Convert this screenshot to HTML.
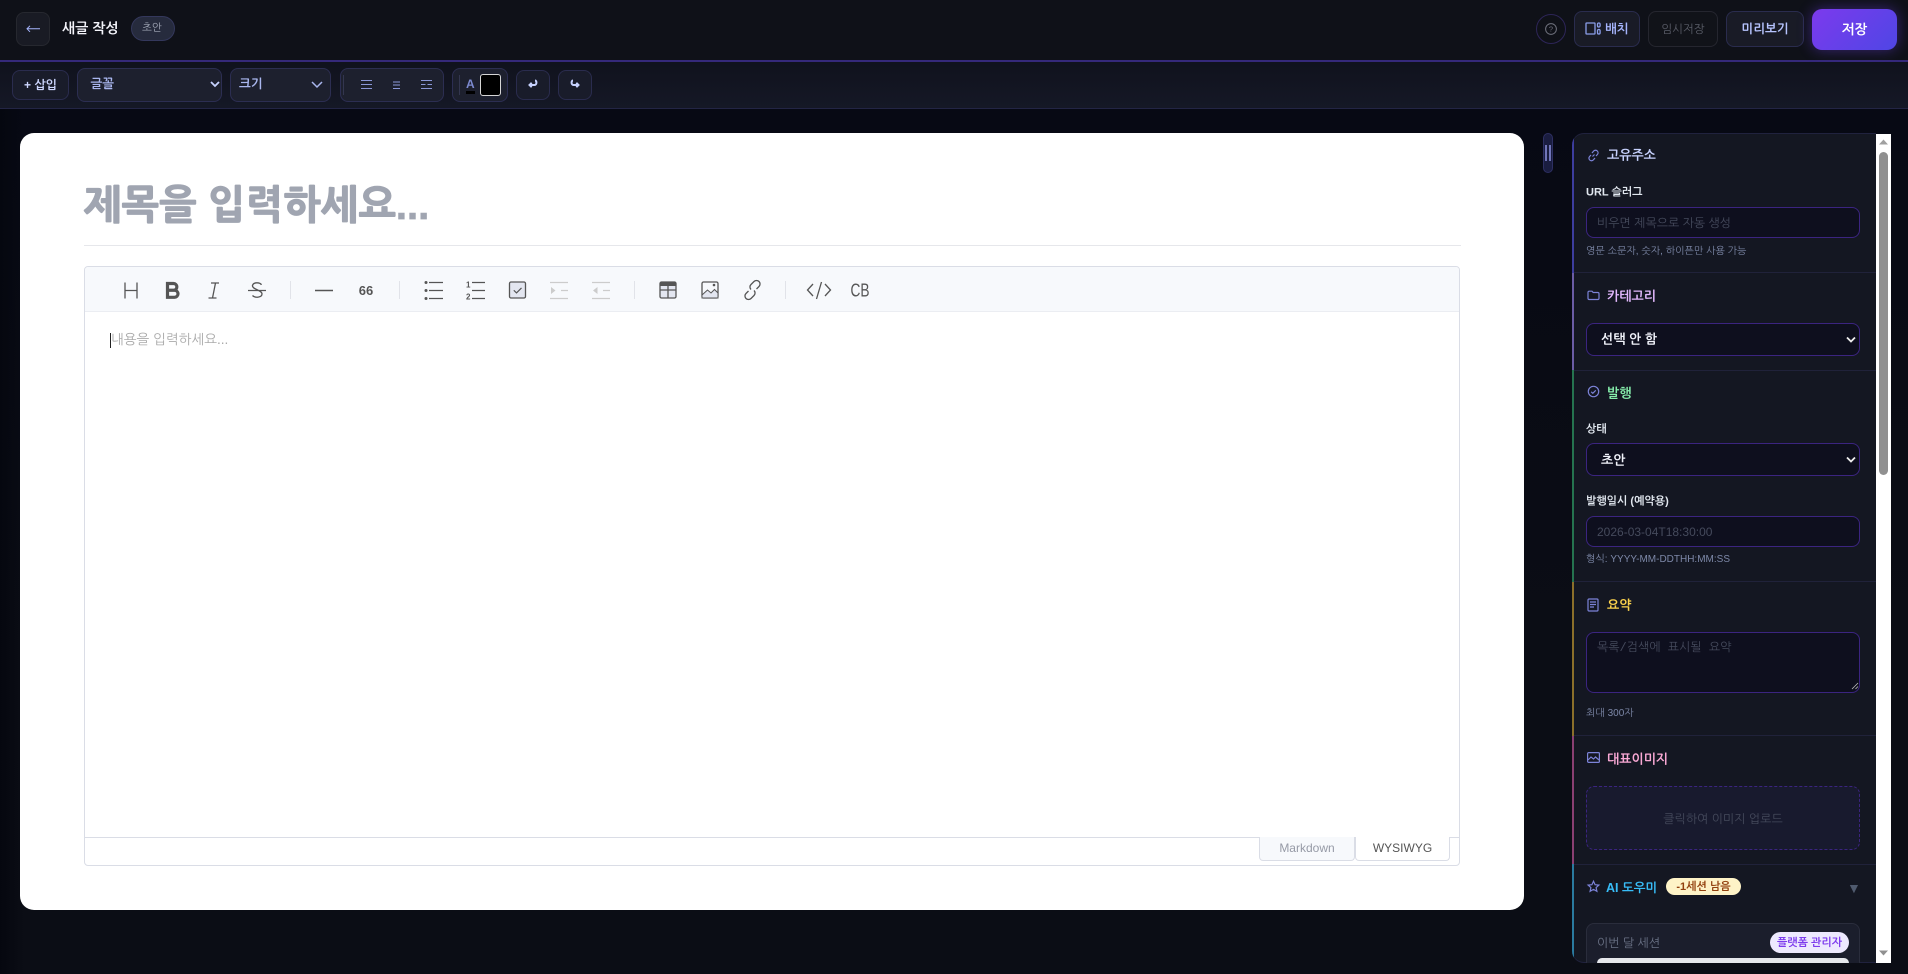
<!DOCTYPE html>
<html lang="ko"><head><meta charset="utf-8"><title>새 글 작성</title>
<style>
*{box-sizing:border-box}
html,body{margin:0;padding:0;width:1908px;height:974px;overflow:hidden;background:#0a0c14;font-family:"Liberation Sans","NanumGothic",sans-serif}
.a{position:absolute;white-space:nowrap}
.t{position:absolute;white-space:nowrap;line-height:1;transform:translateY(-50%)}
.btn{position:absolute;border:1px solid #2a2c4e;border-radius:8px;background:#1a1c27;display:flex;align-items:center;justify-content:center;white-space:nowrap}
.sel{position:absolute;border:1px solid #2c2e52;border-radius:8px;background:#1d202e;color:#c7d2fe;font-size:12px;font-weight:700}
.inp{position:absolute;width:274px;border:1px solid #3b2480;border-radius:8px;background:#0e0f1e}
svg{position:absolute;overflow:visible}
.ic{fill:none;stroke:#7c83d8;stroke-width:1.2}
.sep{position:absolute;top:281px;width:1px;height:18px;background:#e1e3e9}
.head{font-size:13px;font-weight:700}
.lab{font-size:11px;font-weight:700;color:#e2e8f0}
.hint{font-size:10px;color:#7d88a8}
.ph{font-size:12px;color:#454a5c}
.sec{position:absolute;left:0;width:2px}
.line{position:absolute;left:2px;right:0;height:1px;background:#20223a}
</style></head><body>

<!-- header -->
<div class="a" style="left:0;top:0;width:1908px;height:60px;background:#0f1118"></div>
<div class="a" style="left:0;top:60px;width:1908px;height:1.5px;background:#35297a"></div>
<div class="btn" style="left:16px;top:12px;width:34px;height:34px;background:#191b24;border-color:#26282f"></div>
<svg style="left:26px;top:25px" width="14" height="8" viewBox="0 0 14 8"><path d="M14 3.800H1M4 .8 1 3.800l3 3" fill="none" stroke="#a5b4fc" stroke-width="1"/></svg>
<div class="t" style="left:62px;top:28px;font-size:14px;font-weight:700;color:#f4f5fb">새글 작성</div>
<div class="a" style="left:131px;top:16px;width:44px;height:25px;border-radius:13px;background:#262b3d;border:1px solid #34385c"></div>
<div class="t" style="left:142px;top:27.500px;font-size:10.500px;color:#a3a9b8">초안</div>

<div class="a" style="left:1536px;top:14px;width:30px;height:30px;border-radius:50%;border:1px solid #2d2558"></div>
<svg style="left:1545px;top:23px" width="12" height="12" viewBox="0 0 12 12"><circle cx="6" cy="6" r="5.400" fill="none" stroke="#70727e" stroke-width="1"/><text x="6" y="8.600" font-size="7.500" fill="#70727e" text-anchor="middle" font-family="Liberation Sans">?</text></svg>

<div class="btn" style="left:1574px;top:11px;width:66px;height:36px;background:#191b26"></div>
<svg style="left:1585px;top:22px" width="16" height="13" viewBox="0 0 16 13" fill="none" stroke="#8b9eea" stroke-width="1.300"><rect x="1" y="1" width="9" height="11" rx=".5"/><rect x="12.500" y="1" width="2.600" height="4" rx="1.300"/><rect x="12.500" y="7.500" width="2.600" height="4.500" rx="1.300"/></svg>
<div class="t" style="left:1605px;top:29px;font-size:12.500px;font-weight:700;color:#a5b4fc">배치</div>
<div class="btn" style="left:1648px;top:11px;width:70px;height:36px;background:#111319;border-color:#25262f;color:#5b5e69;font-size:11.500px">임시저장</div>
<div class="btn" style="left:1726px;top:11px;width:78px;height:36px;background:#191b26;color:#b6c3fd;font-size:12.500px;font-weight:700">미리보기</div>
<div class="btn" style="left:1812px;top:9px;width:85px;height:41px;border:none;border-radius:10px;background:linear-gradient(135deg,#7c3aed,#4f46e5);color:#fff;font-size:13.500px;font-weight:700;box-shadow:0 0 14px rgba(109,60,235,.45)">저장</div>

<!-- toolbar -->
<div class="a" style="left:0;top:61.500px;width:1908px;height:46.500px;background:linear-gradient(#10121d,#151826)"></div>
<div class="a" style="left:0;top:108px;width:1908px;height:1px;background:#232545"></div>
<div class="a" style="left:0;top:109px;width:1908px;height:865px;background:linear-gradient(180deg,#070914,#0b0d15 60%);"></div>
<div class="a" style="left:0;top:109px;width:24px;height:865px;background:linear-gradient(90deg,#05070f,rgba(5,7,15,0))"></div>

<div class="btn" style="left:12px;top:70px;width:57px;height:30px;background:#191c2a;color:#cdd6fe;font-size:12px;font-weight:700">+ 삽입</div>
<div class="sel" style="left:77px;top:68px;width:145px;height:34px"></div>
<div class="t" style="left:90.500px;top:84px;font-size:12.500px;font-weight:700;color:#a9b6ee">글꼴</div>
<svg style="left:209.500px;top:81px" width="10" height="6" viewBox="0 0 10 6"><path d="M1 1l4 4 4-4" fill="none" stroke="#c7d2fe" stroke-width="1.800"/></svg>
<div class="sel" style="left:230px;top:68px;width:101px;height:34px"></div>
<div class="t" style="left:239px;top:84px;font-size:12.500px;font-weight:700;color:#a9b6ee">크기</div>
<svg style="left:311px;top:81px" width="12" height="7" viewBox="0 0 12 7"><path d="M1 1l5 5 5-5" fill="none" stroke="#a9b6ee" stroke-width="1.500"/></svg>
<div class="sel" style="left:340px;top:68px;width:104px;height:34px"></div>
<div class="a" style="left:343px;top:75px;width:1px;height:20px;background:#33364f"></div>
<svg style="left:361px;top:79px" width="72" height="12" viewBox="0 0 72 12" stroke="#8a97d8" stroke-width="1" fill="none"><path d="M0 1.500h11M0 5.500h11M0 9.500h11M32 3h7M32 6h7M32 9.500h7M60 1.500h11M60 5.500h4.500M66.500 5.500h4.500M60 9.500h11"/></svg>
<div class="sel" style="left:452px;top:68px;width:56px;height:34px"></div>
<div class="a" style="left:459px;top:75px;width:1px;height:20px;background:#33364f"></div>
<div class="t" style="left:466px;top:84px;font-size:12px;font-weight:700;color:#7d8ad0">A</div>
<div class="a" style="left:466px;top:91px;width:9px;height:3px;background:#000"></div>
<div class="a" style="left:479.500px;top:74px;width:21px;height:22px;background:#000;border:1px solid #d6d6d6;border-radius:3px"></div>
<div class="btn" style="left:516px;top:70px;width:34px;height:30px;background:#191c2a"></div>
<svg style="left:528px;top:79px" width="10" height="10" viewBox="0 0 10 10"><path d="M7 1.500c2 0 2 4.500-.5 4.500H2M3.700 3.800 1.500 6l2.200 2.200" fill="none" stroke="#c7d2fe" stroke-width="2"/></svg>
<div class="btn" style="left:558px;top:70px;width:34px;height:30px;background:#191c2a"></div>
<svg style="left:570px;top:79px" width="10" height="10" viewBox="0 0 10 10"><path d="M3 1.500c-2 0-2 4.500.5 4.500H8M6.300 3.800 8.500 6 6.300 8.200" fill="none" stroke="#c7d2fe" stroke-width="2"/></svg>

<!-- handle -->
<div class="a" style="left:1543px;top:133px;width:10px;height:40px;border-radius:5px;background:#1a1d40;border:1px solid #2d2f62"></div>
<div class="a" style="left:1545px;top:145px;width:2px;height:16px;background:#7075b8"></div>
<div class="a" style="left:1549px;top:145px;width:2px;height:16px;background:#7075b8"></div>

<!-- main card -->
<div class="a" style="left:20px;top:133px;width:1504px;height:777px;background:#fff;border-radius:14px"></div>
<div class="t" style="left:84px;top:206px;font-size:40px;font-weight:800;color:#a0a5b1;-webkit-text-stroke:.7px #a0a5b1">제목을 입력하세요...</div>
<div class="a" style="left:84px;top:245px;width:1377px;height:1px;background:#e6e7eb"></div>

<div class="a" style="left:84px;top:266px;width:1376px;height:600px;border:1px solid #dadde6;border-radius:4px"></div>
<div class="a" style="left:85px;top:267px;width:1374px;height:45px;background:#f7f9fc;border-bottom:1px solid #ebedf2;border-radius:3px 3px 0 0"></div>

<svg style="left:0;top:0" width="1000" height="340" viewBox="0 0 1000 340">
<g fill="none" stroke="#555" stroke-width="1.300">
<path d="M125 282.500v16M137 282.500v16M125 290.500h12"/>
<path d="M167.500 283.500h6a3.300 3.300 0 0 1 0 6.700h-6zM167.500 290.300h7a3.500 3.500 0 0 1 0 7h-7z" stroke-width="3.200"/>
<path d="M211 283h8M208.500 298h8M215.500 283l-3 15"/>
<path d="M248 290.500h18M261.500 284.800c-1.500-2.500-8-3-9 .6-1 4 9.500 4.500 9.500 8.500 0 3.800-7 4.300-9.500 1.600"/>
<path d="M315 290.500h18" stroke-width="1.500"/>
<path d="M429 282.500h14M429 290.500h14M429 298.500h14M472 282.500h13M472 290.500h13M472 298.500h13"/>
<rect x="509.500" y="282" width="16" height="16" rx="1.500" fill="#e3e6f0"/>
<path d="M513.800 290.300l2.700 2.600 5-5" stroke-width="1.200"/>
<rect x="660" y="282" width="16" height="16" rx="1.500" fill="#e3e6f0"/>
<path d="M660 290h16M668 283v15"/>
<rect x="702" y="282" width="16" height="16" rx="1.500"/>
<path d="M702 295l5.500-5 3.500 3 3.500-3.500 3.500 3.500v5h-16z" fill="#e3e6f0" stroke-width="1"/>
<path d="M749 291.500l-2.500 2.500a3.500 3.500 0 0 0 5 5l3-3a3.500 3.500 0 0 0 0-5M757 289.500l2.500-2.500a3.500 3.500 0 0 0-5-5l-3 3a3.500 3.500 0 0 0 0 5" transform="translate(-.500 -.500)"/>
<path d="M813 284l-5.500 6 5.500 6M825 284l5.500 6-5.500 6M821.500 282l-5 17"/>
</g>
<rect x="660" y="282" width="16" height="4" fill="#555"/>
<circle cx="426" cy="282.500" r="1.500" fill="#555"/><circle cx="426" cy="290.500" r="1.500" fill="#555"/><circle cx="426" cy="298.500" r="1.500" fill="#555"/>
<circle cx="714" cy="285" r="1.300" fill="#555"/>
<g fill="none" stroke="#ccc" stroke-width="1.300"><path d="M550 282.500h18M561 290.500h7M550 298.500h18M592 282.500h18M603 290.500h7M592 298.500h18"/></g>
<path d="M551 287l4.500 3.500-4.500 3.500zM597.500 287l-4.500 3.500 4.500 3.500z" fill="#ccc"/>
<text x="470.500" y="287.500" font-size="8" font-weight="700" fill="#555" font-family="Liberation Sans" text-anchor="end">1</text>
<text x="470.500" y="299.500" font-size="8" font-weight="700" fill="#555" font-family="Liberation Sans" text-anchor="end">2</text>
<text x="366" y="295" font-size="13" font-weight="700" fill="#555" font-family="Liberation Sans" text-anchor="middle">66</text>
<text x="850.500" y="296.500" font-size="18" fill="#555" font-family="Liberation Sans" textLength="19" lengthAdjust="spacingAndGlyphs">CB</text>
</svg>
<div class="sep" style="left:290px"></div><div class="sep" style="left:399px"></div><div class="sep" style="left:634px"></div><div class="sep" style="left:785px"></div>

<div class="a" style="left:110px;top:333px;width:1px;height:15px;background:#222"></div>
<div class="t" style="left:111px;top:340px;font-size:13.600px;color:#aaa">내용을 입력하세요...</div>

<div class="a" style="left:85px;top:837px;width:1374px;height:1px;background:#dadde6"></div>
<div class="a" style="left:1259px;top:837px;width:96px;height:24px;background:#f7f9fc;border:1px solid #dadde6;border-top:0;border-radius:0 0 4px 4px;color:#969aa6;font-size:12px;text-align:center;line-height:22px">Markdown</div>
<div class="a" style="left:1355px;top:837px;width:95px;height:24px;background:#fff;border:1px solid #dadde6;border-top:0;border-radius:0 0 4px 4px;color:#555;font-size:12px;text-align:center;line-height:22px">WYSIWYG</div>

<!-- side panel -->
<div class="a" style="left:1572px;top:133px;width:304px;height:830px;background:#141722;border-radius:12px 0 0 12px;overflow:hidden;box-shadow:inset 0 1px 0 #20223e,inset 0 -1px 0 #20223e">
  <div class="sec" style="top:0;height:140px;background:#3d3d9e"></div>
  <div class="sec" style="top:140px;height:97px;background:#6b5ca5"></div>
  <div class="sec" style="top:237px;height:212px;background:#25734f"></div>
  <div class="sec" style="top:449px;height:154px;background:#8b6f2a"></div>
  <div class="sec" style="top:603px;height:128px;background:#8a3f72"></div>
  <div class="sec" style="top:731px;height:99px;background:#2a7a9f"></div>
  <div class="line" style="top:139px"></div><div class="line" style="top:237px"></div><div class="line" style="top:448px"></div><div class="line" style="top:602px"></div><div class="line" style="top:731px"></div>
 <div class="a" style="left:1px;top:0;width:303px;height:830px">
  <!-- 1 -->
  <svg style="left:14px;top:16px" width="13" height="13" viewBox="0 0 13 13" class="ic"><path d="M5.500 7.500l2-2M5 4l1.500-1.800a2.500 2.500 0 0 1 4 3.200L9 7M8 9l-1.500 1.800a2.500 2.500 0 0 1-4-3.200L4 6"/></svg>
  <div class="t head" style="left:34px;top:22px;color:#c7d2fe">고유주소</div>
  <div class="t lab" style="left:13px;top:60px">URL 슬러그</div>
  <div class="inp" style="top:74px;height:31px;left:13px"></div>
  <div class="t ph" style="left:24px;top:90px">비우면 제목으로 자동 생성</div>
  <div class="t hint" style="left:13px;top:119px">영문 소문자, 숫자, 하이픈만 사용 가능</div>

  <!-- 2 -->
  <svg style="left:14px;top:157px" width="13" height="11" viewBox="0 0 13 11" class="ic"><path d="M1 2.500c0-.8.500-1.300 1.200-1.300h2.800l1.200 1.300h4.600c.7 0 1.200.5 1.200 1.200v4.600c0 .7-.5 1.200-1.200 1.200H2.200c-.7 0-1.200-.5-1.200-1.200z"/></svg>
  <div class="t head" style="left:34px;top:163px;color:#e2b8fd">카테고리</div>
  <div class="inp" style="top:190px;height:33px;left:13px"></div>
  <div class="t" style="left:28px;top:206px;font-size:13px;font-weight:700;color:#f1f3fb">선택 안 함</div>
  <svg style="left:273px;top:203px" width="10" height="7" viewBox="0 0 10 7"><path d="M1 1.500l4 4 4-4" fill="none" stroke="#eee" stroke-width="1.800"/></svg>

  <!-- 3 -->
  <svg style="left:14px;top:252px" width="13" height="13" viewBox="0 0 13 13" class="ic"><circle cx="6.500" cy="6.500" r="5.200"/><path d="M4.200 6.800l1.600 1.500 3-3"/></svg>
  <div class="t head" style="left:34px;top:260px;color:#86efac">발행</div>
  <div class="t lab" style="left:13px;top:297px">상태</div>
  <div class="inp" style="top:310px;height:33px;left:13px"></div>
  <div class="t" style="left:28px;top:327px;font-size:13px;font-weight:700;color:#f1f3fb">초안</div>
  <svg style="left:273px;top:323px" width="10" height="7" viewBox="0 0 10 7"><path d="M1 1.500l4 4 4-4" fill="none" stroke="#eee" stroke-width="1.800"/></svg>
  <div class="t lab" style="left:13px;top:369px">발행일시 (예약용)</div>
  <div class="inp" style="top:383px;height:31px;left:13px"></div>
  <div class="t ph" style="left:24px;top:398.500px">2026-03-04T18:30:00</div>
  <div class="t hint" style="left:13px;top:427px">형식: YYYY-MM-DDTHH:MM:SS</div>

  <!-- 4 -->
  <svg style="left:14px;top:465px" width="12" height="14" viewBox="0 0 12 14" class="ic"><rect x="1" y="1" width="10" height="12" rx="1"/><path d="M3 4h6M3 6.500h6M3 9h4"/></svg>
  <div class="t head" style="left:34px;top:472px;color:#fcd34d">요약</div>
  <div class="inp" style="top:499px;height:61px;left:13px"></div>
  <div class="t" style="left:24px;top:515px;font-size:12px;color:#454a5c;font-family:'Liberation Mono','NanumGothic',monospace">목록/검색에 표시될 요약</div>
  <svg style="left:278px;top:549px" width="8" height="8" viewBox="0 0 8 8"><path d="M1 7l6-6M4.500 7L7 4.500" stroke="#bbb" stroke-width=".8" fill="none"/></svg>
  <div class="t hint" style="left:13px;top:581px">최대 300자</div>

  <!-- 5 -->
  <svg style="left:14px;top:619px" width="13" height="11" viewBox="0 0 13 11" class="ic"><rect x=".6" y=".6" width="11.800" height="9.800" rx="1"/><path d="M1 8l3-3 2.500 2 2-2 3.500 3"/></svg>
  <div class="t head" style="left:34px;top:626px;color:#f9a8d4">대표이미지</div>
  <div class="a" style="left:13px;top:653px;width:274px;height:64px;background:#181a2e;border:1px dashed #3b2480;border-radius:8px"></div>
  <div class="t ph" style="left:13px;width:274px;text-align:center;top:686px">클릭하여 이미지 업로드</div>

  <!-- 6 -->
  <svg style="left:14px;top:747px" width="13" height="13" viewBox="0 0 13 13" class="ic"><path d="M6.500 1.200l1.600 3.500 3.800.4-2.800 2.500.8 3.700-3.400-1.900-3.400 1.900.8-3.700L1.100 5.100l3.800-.4z"/></svg>
  <div class="t head" style="left:33px;top:755px;color:#38bdf8;font-size:12.500px">AI 도우미</div>
  <div class="a" style="left:93px;top:745px;width:75px;height:17px;border-radius:9px;background:#fef3c7;color:#92400e;font-size:11px;font-weight:700;text-align:center;line-height:18px">-1세션 남음</div>
  <div class="t" style="left:274px;top:755px;font-size:14px;color:#4f5a6e">▼</div>
  <div class="a" style="left:13px;top:790px;width:274px;height:60px;background:#1b1e2c;border:1px solid #2a2d3c;border-radius:8px"></div>
  <div class="t" style="left:24px;top:810px;font-size:12px;color:#6c7488">이번 달 세션</div>
  <div class="a" style="left:197px;top:799px;width:79px;height:21px;border-radius:11px;background:#ede9fe;color:#7c3aed;font-size:11px;font-weight:700;text-align:center;line-height:22px">플랫폼 관리자</div>
  <div class="a" style="left:24px;top:825px;width:252px;height:10px;border-radius:5px 5px 0 0;background:#e5e7eb"></div>
 </div>
</div>

<!-- scrollbar -->
<div class="a" style="left:1876px;top:134px;width:15px;height:829px;background:#fff"></div>
<div class="a" style="left:1879px;top:152px;width:9px;height:323px;background:#909090;border-radius:4.500px"></div>
<svg style="left:1879px;top:139px" width="9" height="6" viewBox="0 0 9 6"><path d="M4.500 .5L9 5.500H0z" fill="#a0a0a0"/></svg>
<svg style="left:1879px;top:950px" width="9" height="6" viewBox="0 0 9 6"><path d="M4.500 5.500L9 .5H0z" fill="#909090"/></svg>
</body></html>
